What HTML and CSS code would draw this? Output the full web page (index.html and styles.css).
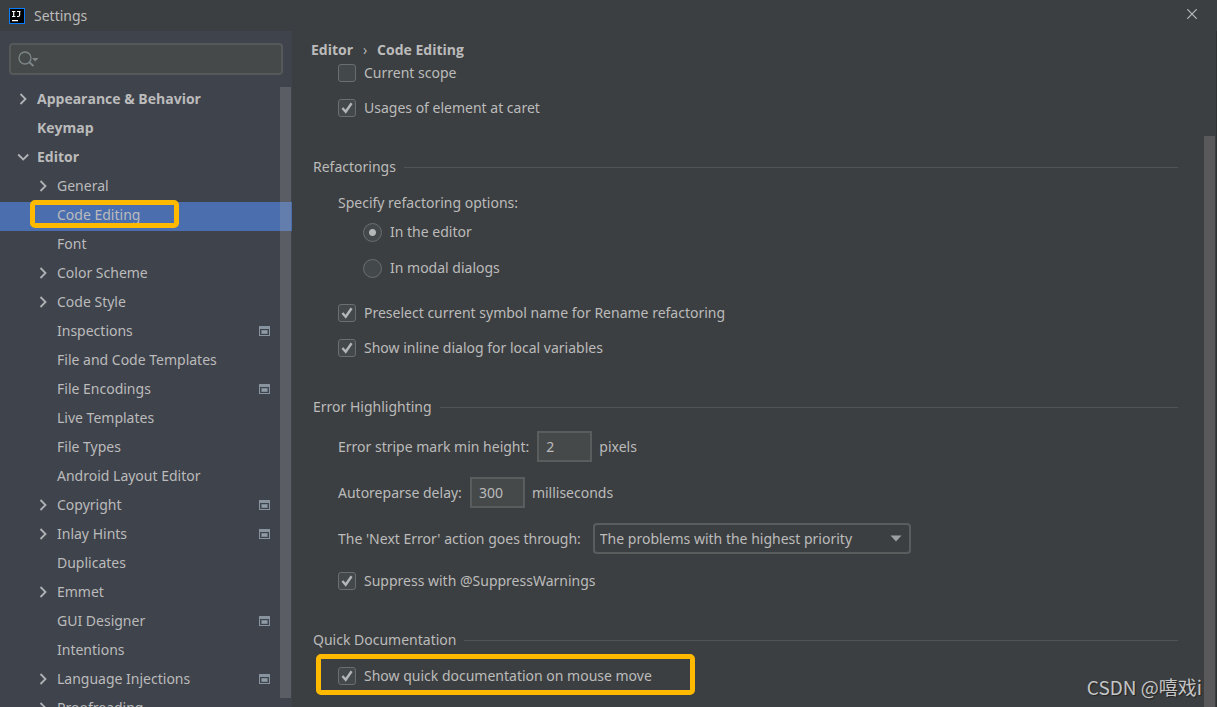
FILE: index.html
```html
<!DOCTYPE html>
<html lang="en">
<head>
<meta charset="utf-8">
<title>Settings</title>
<link rel="stylesheet" href="styles.css">
</head>
<body>
<svg class="defs" aria-hidden="true">
  <symbol id="right" viewBox="0 0 12 12"><path d="M3.5 1 L8.5 6 L3.5 11" fill="none" stroke="#b0b3b6" stroke-width="1.8"/></symbol>
  <symbol id="down" viewBox="0 0 12 12"><path d="M1.2 3.5 L6.2 8.5 L11.2 3.5" fill="none" stroke="#b0b3b6" stroke-width="1.8"/></symbol>
  <symbol id="module" viewBox="0 0 11 10"><path d="M0 0H11V10H0Z M1 3V9H10V3Z" fill="#87939e" fill-rule="evenodd"/><path d="M2 4H9V8H2Z" fill="#66707c"/><path d="M3 4.5H8V7.5H3Z" fill="#919da6"/></symbol>
  <symbol id="tick" viewBox="0 0 18 18"><path d="M4.400 9 L7.700 12.800 L13.600 4.200" fill="none" stroke="#b4b6b7" stroke-width="2.4"/></symbol>
</svg>
<header class="titlebar">
  <svg class="logo" viewBox="0 0 16 16" aria-hidden="true"><rect width="16" height="16" fill="#087cfa"/><rect x="1" y="1" width="14" height="14" fill="#000"/><path d="M3 3.5H6.4M4.7 3.5V8.5M3 8.5H6.4M8 3.5H11.5M10.6 3.5V7Q10.6 8.5 9.3 8.5H8M3 12.7H9" fill="none" stroke="#fff" stroke-width="1.2"/></svg>
  <h1 class="title">Settings</h1>
  <button class="close" aria-label="Close"><svg viewBox="0 0 10 10" width="10" height="10"><path d="M0.3 0.3L9.7 9.7M9.7 0.3L0.3 9.7" stroke="#b9bbbc" stroke-width="1.2"/></svg></button>
</header>
<div class="window">
  <aside class="sidebar">
    <label class="search">
      <svg viewBox="0 0 22 18" width="22" height="18" aria-hidden="true"><circle cx="7" cy="8" r="6" fill="none" stroke="#7d868a" stroke-width="1.3"/><path d="M11 12L15.5 16" stroke="#7d868a" stroke-width="1.8"/><path d="M14 8H20.500L17.200 11.500Z" fill="#7d868a"/></svg>
      <input class="search-input" type="text" aria-label="Search settings">
    </label>
    <nav class="tree">
      <a class="node top" href="#"><svg class="arrow"><use href="#right"/></svg>Appearance &amp; Behavior</a>
      <a class="node top" href="#"><span class="arrow"></span>Keymap</a>
      <a class="node top" href="#"><svg class="arrow"><use href="#down"/></svg>Editor</a>
      <a class="node" href="#"><svg class="arrow"><use href="#right"/></svg>General</a>
      <a class="node selected" href="#" aria-current="page"><span class="arrow"></span>Code Editing<span class="mark mark-node"></span></a>
      <a class="node" href="#"><span class="arrow"></span>Font</a>
      <a class="node" href="#"><svg class="arrow"><use href="#right"/></svg>Color Scheme</a>
      <a class="node" href="#"><svg class="arrow"><use href="#right"/></svg>Code Style</a>
      <a class="node" href="#"><span class="arrow"></span>Inspections<svg class="module"><use href="#module"/></svg></a>
      <a class="node" href="#"><span class="arrow"></span>File and Code Templates</a>
      <a class="node" href="#"><span class="arrow"></span>File Encodings<svg class="module"><use href="#module"/></svg></a>
      <a class="node" href="#"><span class="arrow"></span>Live Templates</a>
      <a class="node" href="#"><span class="arrow"></span>File Types</a>
      <a class="node" href="#"><span class="arrow"></span>Android Layout Editor</a>
      <a class="node" href="#"><svg class="arrow"><use href="#right"/></svg>Copyright<svg class="module"><use href="#module"/></svg></a>
      <a class="node" href="#"><svg class="arrow"><use href="#right"/></svg>Inlay Hints<svg class="module"><use href="#module"/></svg></a>
      <a class="node" href="#"><span class="arrow"></span>Duplicates</a>
      <a class="node" href="#"><svg class="arrow"><use href="#right"/></svg>Emmet</a>
      <a class="node" href="#"><span class="arrow"></span>GUI Designer<svg class="module"><use href="#module"/></svg></a>
      <a class="node" href="#"><span class="arrow"></span>Intentions</a>
      <a class="node" href="#"><svg class="arrow"><use href="#right"/></svg>Language Injections<svg class="module"><use href="#module"/></svg></a>
      <a class="node" href="#"><svg class="arrow"><use href="#right"/></svg>Proofreading</a>
      <span class="thumb"></span>
    </nav>
  </aside>
  <main class="main">
    <h2 class="crumbs"><span>Editor</span><span class="sep">›</span><span>Code Editing</span></h2>
    <section class="group">
      <label class="row"><span class="box"><input type="checkbox"></span>Current scope</label>
      <label class="row"><span class="box"><input type="checkbox" checked><svg class="tick"><use href="#tick"/></svg></span>Usages of element at caret</label>
    </section>
    <section class="group">
      <h3 class="heading">Refactorings</h3>
      <div class="row">Specify refactoring options:</div>
      <div class="radios">
        <label class="row"><input class="radio" type="radio" name="mode" checked>In the editor</label>
        <label class="row"><input class="radio" type="radio" name="mode">In modal dialogs</label>
      </div>
      <label class="row"><span class="box"><input type="checkbox" checked><svg class="tick"><use href="#tick"/></svg></span>Preselect current symbol name for Rename refactoring</label>
      <label class="row"><span class="box"><input type="checkbox" checked><svg class="tick"><use href="#tick"/></svg></span>Show inline dialog for local variables</label>
    </section>
    <section class="group">
      <h3 class="heading">Error Highlighting</h3>
      <div class="fields">
        <div class="field"><label for="stripe">Error stripe mark min height:</label><input class="number" id="stripe" type="text" value="2"><span class="unit">pixels</span></div>
        <div class="field"><label for="delay">Autoreparse delay:</label><input class="number" id="delay" type="text" value="300"><span class="unit">milliseconds</span></div>
        <div class="field"><label for="next">The 'Next Error' action goes through:</label><span class="combo"><select id="next"><option>The problems with the highest priority</option></select><svg class="caret" viewBox="0 0 12 7"><path d="M0.500 0.500H11.500L6 6.500Z" fill="#9da0a3"/></svg></span></div>
      </div>
      <label class="row"><span class="box"><input type="checkbox" checked><svg class="tick"><use href="#tick"/></svg></span>Suppress with @SuppressWarnings</label>
    </section>
    <section class="group">
      <h3 class="heading">Quick Documentation</h3>
      <label class="row"><span class="box"><input type="checkbox" checked><svg class="tick"><use href="#tick"/></svg></span>Show quick documentation on mouse move<span class="mark mark-option"></span></label>
    </section>
    <span class="page-thumb"></span>
    <span class="watermark">CSDN @嘻戏i</span>
  </main>
</div>
</body>
</html>
```
FILE: styles.css
```css
* { box-sizing: border-box; }
body {
  margin: 0;
  height: 100vh;
  overflow: hidden;
  display: flex;
  flex-direction: column;
  background: #3c3f41;
  color: #bbbbbb;
  font: 14px/24px "Noto Sans", "Open Sans", sans-serif;
}
input, select, button { font: inherit; color: inherit; margin: 0; }
h1, h2, h3 { margin: 0; font-size: inherit; font-weight: 400; }
.defs { position: absolute; width: 0; height: 0; }

.titlebar {
  display: flex;
  align-items: center;
  height: 31px;
  flex: none;
  padding: 0 20px 0 9px;
}
.logo { width: 16px; height: 16px; margin-right: 9px; }
.close {
  display: flex;
  margin: 0 0 3px auto;
  padding: 0;
  border: 0;
  background: none;
}

.window { display: flex; flex: 1; min-height: 0; }
.sidebar {
  width: 292px;
  flex: none;
  display: flex;
  flex-direction: column;
  padding-top: 12px;
  background: #3f434c;
}
.search {
  display: flex;
  align-items: center;
  flex: none;
  height: 32px;
  margin: 0 9px 11px;
  padding-left: 7px;
  border: 2px solid #56595a;
  border-radius: 4px;
  background: #45494a;
}
.search-input { flex: 1; min-width: 0; border: 0; background: none; outline: 0; }

.tree { position: relative; flex: 1; min-height: 0; overflow: hidden; }
.node {
  position: relative;
  display: flex;
  align-items: center;
  height: 29px;
  padding: 0 22px 3px 37px;
  color: inherit;
  text-decoration: none;
}
.top { padding-left: 17px; font-family: "Open Sans", sans-serif; font-weight: 700; }
.selected { background: #4b6eaf; }
.arrow { width: 12px; height: 12px; margin-right: 8px; flex: none; }
.module { width: 11px; height: 10px; margin-left: auto; }
.thumb {
  position: absolute;
  top: 1px;
  right: 1px;
  bottom: 9px;
  width: 11px;
  background: rgba(166, 166, 166, 0.27);
}
.mark { position: absolute; border: 5px solid #ffba00; border-radius: 5px; pointer-events: none; }
.mark-node { top: -2px; left: 30px; width: 149px; height: 28px; }
.mark-option { top: -10px; left: -22px; width: 379px; height: 41px; }

.main { position: relative; flex: 1; min-width: 0; padding: 7px 38px 0 21px; border-right: 1px solid #2f3233; }
.crumbs { display: flex; margin: 0 0 -1px -2px; font-family: "Open Sans", sans-serif; font-weight: 700; }
.sep { width: 24px; text-align: center; font-weight: 400; }
.group { display: flex; flex-direction: column; gap: 11px; margin-bottom: 35px; }
.heading { display: flex; align-items: center; gap: 8px; margin-bottom: 1px; }
.heading::after { content: ""; flex: 1; height: 1px; background: #515456; }
.row { position: relative; display: flex; align-items: center; align-self: flex-start; gap: 8px; margin-left: 25px; }
.box { display: grid; width: 18px; height: 18px; }
.box > * { grid-area: 1 / 1; width: 18px; height: 18px; }
.box input { appearance: none; border: 1px solid #6b6e6f; border-radius: 3px; background: #43494a; }
.tick { pointer-events: none; }
.radios { display: flex; flex-direction: column; gap: 12px; margin: -6px 0 10px 25px; }
.radio {
  appearance: none;
  width: 19px;
  height: 19px;
  border: 1px solid #6b6e6f;
  border-radius: 50%;
  background: #43494a;
}
.radio:checked { background: radial-gradient(circle, #b4b6b7 3px, #43494a 4px); }

.fields { display: flex; flex-direction: column; gap: 15px; margin: 0 0 4px 25px; }
.field { display: flex; align-items: center; }
.number {
  width: 55px;
  height: 31px;
  margin: 0 7px 0 8px;
  padding: 0 7px;
  border: 2px solid #5a5d5e;
  background: #45494a;
}
.combo { display: grid; width: 318px; height: 31px; margin-left: 12px; }
.combo > * { grid-area: 1 / 1; }
.combo select {
  appearance: none;
  padding: 0 30px 0 5px;
  border: 2px solid #5a5d5e;
  border-radius: 4px;
  background: #3c3f41;
}
.caret { width: 12px; height: 7px; place-self: center end; margin-right: 9px; pointer-events: none; }

.page-thumb { position: absolute; top: 105px; right: 1px; bottom: 0; width: 11px; background: #59595b; }
.watermark {
  position: absolute;
  right: 14px;
  bottom: 7px;
  font: 19px/26px "Noto Sans CJK SC", sans-serif;
  color: #c4c5c6;
  text-shadow: 1px 1px 1px #222;
}
```
